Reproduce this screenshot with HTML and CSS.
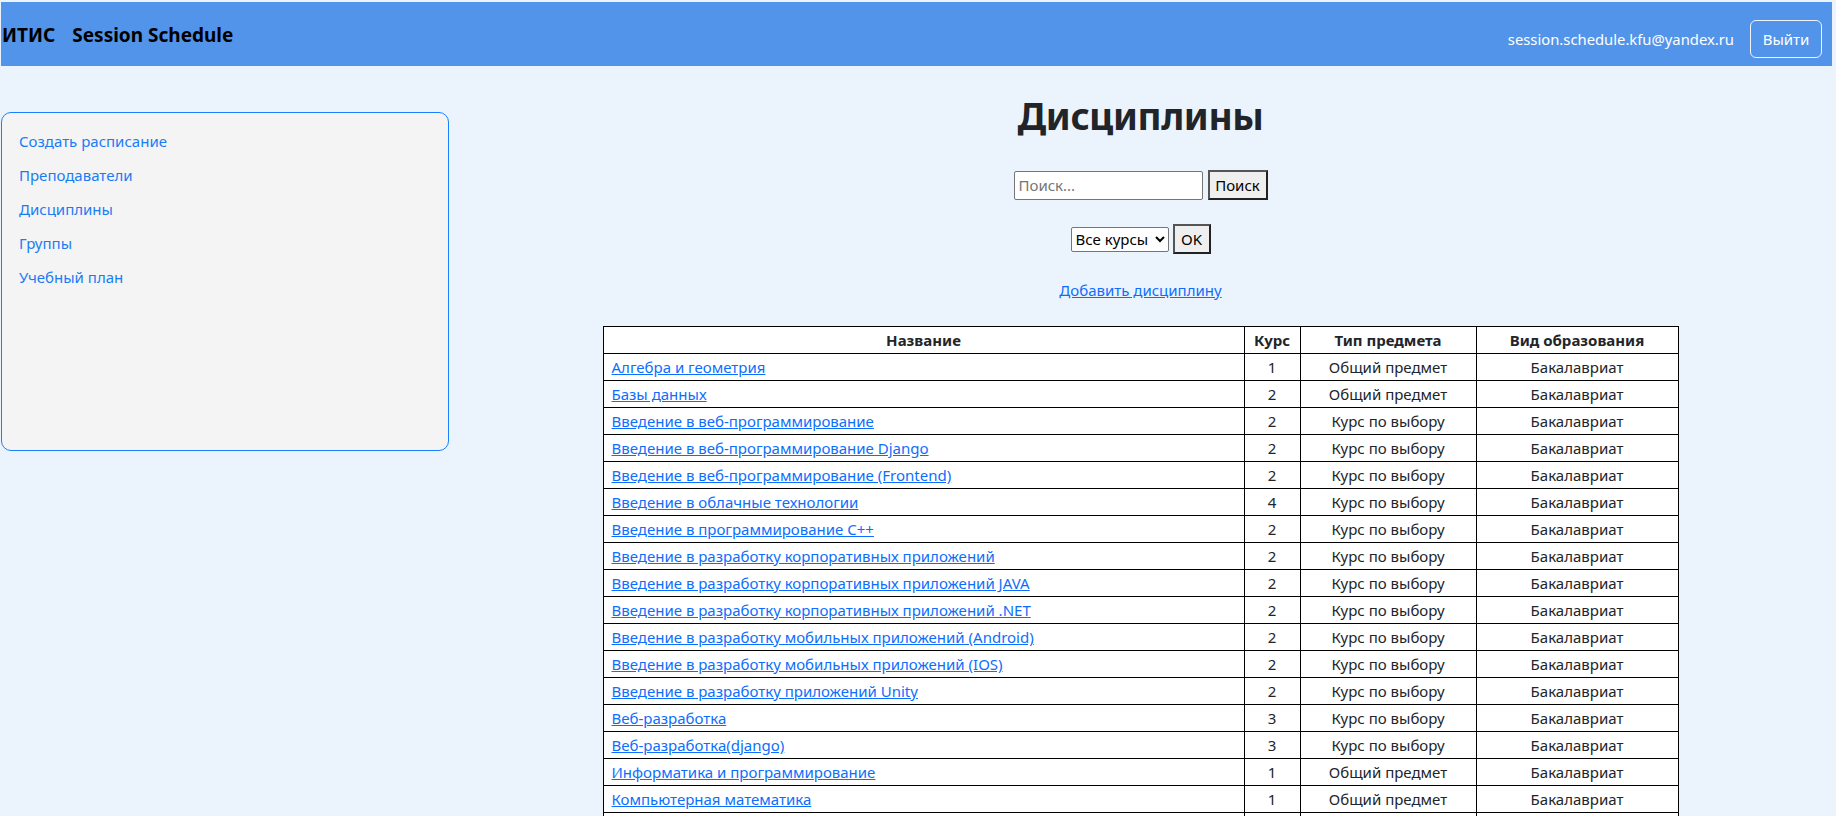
FILE: index.html
```html
<!DOCTYPE html>
<html lang="ru">
<head>
<meta charset="utf-8">
<title>Дисциплины</title>
<link rel="stylesheet" href="styles.css">
</head>
<body>
<header class="navbar">
  <div class="brand"><span>ИТИС</span><span>Session Schedule</span></div>
  <div class="nav-right">
    <span class="email">session.schedule.kfu@yandex.ru</span>
    <button class="btn-logout">Выйти</button>
  </div>
</header>
<div class="layout">
  <aside class="sidebar">
    <a href="#">Создать расписание</a>
    <a href="#">Преподаватели</a>
    <a href="#">Дисциплины</a>
    <a href="#">Группы</a>
    <a href="#">Учебный план</a>
  </aside>
  <main class="main">
    <h1 class="title">Дисциплины</h1>
    <form class="search-row">
      <input class="search-input" type="text" placeholder="Поиск...">
      <button class="btn" type="button">Поиск</button>
    </form>
    <form class="filter-row">
      <select class="course-select"><option>Все курсы</option><option>1</option><option>2</option><option>3</option><option>4</option></select>
      <button class="btn btn-ok" type="button">OK</button>
    </form>
    <a class="add-link" href="#">Добавить дисциплину</a>
    <table class="grid">
      <thead>
        <tr><th class="c-name">Название</th><th class="c-course">Курс</th><th class="c-type">Тип предмета</th><th class="c-kind">Вид образования</th></tr>
      </thead>
      <tbody>
        <tr><td><a href="#">Алгебра и геометрия</a></td><td>1</td><td>Общий предмет</td><td>Бакалавриат</td></tr>
        <tr><td><a href="#">Базы данных</a></td><td>2</td><td>Общий предмет</td><td>Бакалавриат</td></tr>
        <tr><td><a href="#">Введение в веб-программирование</a></td><td>2</td><td>Курс по выбору</td><td>Бакалавриат</td></tr>
        <tr><td><a href="#">Введение в веб-программирование Django</a></td><td>2</td><td>Курс по выбору</td><td>Бакалавриат</td></tr>
        <tr><td><a href="#">Введение в веб-программирование (Frontend)</a></td><td>2</td><td>Курс по выбору</td><td>Бакалавриат</td></tr>
        <tr><td><a href="#">Введение в облачные технологии</a></td><td>4</td><td>Курс по выбору</td><td>Бакалавриат</td></tr>
        <tr><td><a href="#">Введение в программирование C++</a></td><td>2</td><td>Курс по выбору</td><td>Бакалавриат</td></tr>
        <tr><td><a href="#">Введение в разработку корпоративных приложений</a></td><td>2</td><td>Курс по выбору</td><td>Бакалавриат</td></tr>
        <tr><td><a href="#">Введение в разработку корпоративных приложений JAVA</a></td><td>2</td><td>Курс по выбору</td><td>Бакалавриат</td></tr>
        <tr><td><a href="#">Введение в разработку корпоративных приложений .NET</a></td><td>2</td><td>Курс по выбору</td><td>Бакалавриат</td></tr>
        <tr><td><a href="#">Введение в разработку мобильных приложений (Android)</a></td><td>2</td><td>Курс по выбору</td><td>Бакалавриат</td></tr>
        <tr><td><a href="#">Введение в разработку мобильных приложений (IOS)</a></td><td>2</td><td>Курс по выбору</td><td>Бакалавриат</td></tr>
        <tr><td><a href="#">Введение в разработку приложений Unity</a></td><td>2</td><td>Курс по выбору</td><td>Бакалавриат</td></tr>
        <tr><td><a href="#">Веб-разработка</a></td><td>3</td><td>Курс по выбору</td><td>Бакалавриат</td></tr>
        <tr><td><a href="#">Веб-разработка(django)</a></td><td>3</td><td>Курс по выбору</td><td>Бакалавриат</td></tr>
        <tr><td><a href="#">Информатика и программирование</a></td><td>1</td><td>Общий предмет</td><td>Бакалавриат</td></tr>
        <tr><td><a href="#">Компьютерная математика</a></td><td>1</td><td>Общий предмет</td><td>Бакалавриат</td></tr>
        <tr><td><a href="#">Математический анализ</a></td><td>1</td><td>Общий предмет</td><td>Бакалавриат</td></tr>
        <tr><td><a href="#">Операционные системы</a></td><td>2</td><td>Общий предмет</td><td>Бакалавриат</td></tr>
      </tbody>
    </table>
  </main>
</div>
</body>
</html>
```

FILE: styles.css
```css
* { box-sizing: border-box; }

html, body {
  margin: 0;
  background: #ebf3fd;
}

body {
  padding: 2px 4px 0 1px;
  font-family: "Noto Sans", "Open Sans", sans-serif;
  font-size: 16px;
  color: #212529;
}

.navbar {
  height: 64px;
  background: #5294e9;
  display: flex;
  justify-content: space-between;
  align-items: flex-start;
  padding: 0 10px 0 1px;
}

.brand {
  display: flex;
  gap: 17px;
  font-size: 19px;
  font-weight: 700;
  color: #000;
  line-height: 28px;
  margin-top: 19px;
}

.nav-right {
  display: flex;
  align-items: center;
  gap: 16px;
  margin-top: 18px;
}

.email {
  color: #fff;
  font-size: 14.8px;
}

.btn-logout {
  height: 38px;
  width: 72px;
  background: transparent;
  border: 1px solid #f0f4fa;
  border-radius: 6px;
  color: #fff;
  font-family: inherit;
  font-size: 15px;
  padding: 0;
}

.layout {
  display: flex;
  align-items: flex-start;
}

.sidebar {
  width: 448px;
  height: 339px;
  margin-top: 46px;
  background: #f4f4f4;
  border: 1px solid #1a7fff;
  border-radius: 10px;
  padding: 16px 17px;
  display: flex;
  flex-direction: column;
  gap: 10px;
  flex-shrink: 0;
}

.sidebar a {
  color: #1a7cf5;
  text-decoration: none;
  font-size: 15px;
  line-height: 24px;
}

.main {
  flex: 1;
  display: flex;
  flex-direction: column;
  align-items: center;
  padding-top: 26px;
}

.title {
  margin: 0;
  font-size: 37px;
  letter-spacing: -0.4px;
  line-height: 47px;
  font-weight: 700;
  color: #212529;
}

.search-row {
  margin: 31px 0 0;
  display: flex;
  align-items: center;
  gap: 5px;
}

.search-input {
  width: 189px;
  height: 29px;
  border: 1px solid #767676;
  border-radius: 2px;
  background: #fff;
  padding: 0 4px;
  font-family: inherit;
  font-size: 15px;
  color: #000;
}

.search-input::placeholder { color: #757575; }

.btn {
  height: 30px;
  background: #efefef;
  border: 2px solid;
  border-color: #555 #222 #222 #555;
  font-family: inherit;
  font-size: 15px;
  color: #000;
  padding: 0 5px;
}

.search-row .btn { width: 60px; }

.filter-row {
  margin: 24px 0 0;
  display: flex;
  align-items: center;
  gap: 4px;
}

.course-select {
  width: 98px;
  height: 25px;
  border: 1px solid #767676;
  border-radius: 2px;
  background: #fff;
  font-family: inherit;
  font-size: 15px;
  color: #000;
}

.btn-ok { width: 38px; padding: 0; }

.add-link {
  margin-top: 24px;
  color: #0d6efd;
  font-size: 15px;
  line-height: 24px;
  text-decoration: underline;
}

.grid {
  margin-top: 24px;
  border-collapse: collapse;
  background: #fff;
  font-size: 15px;
  table-layout: fixed;
  width: 1075px;
}

.grid th, .grid td {
  border: 1px solid #000;
  padding: 1px 5px;
  height: 27px;
  line-height: 24px;
  text-align: center;
  white-space: nowrap;
}

.grid th { font-weight: 700; }

.grid td:first-child { text-align: left; padding-left: 8px; }

.grid td a { color: #0d6efd; text-decoration: underline; }

.c-name { width: 641px; }
.c-course { width: 56px; }
.c-type { width: 176px; }
.c-kind { width: 202px; }
```
